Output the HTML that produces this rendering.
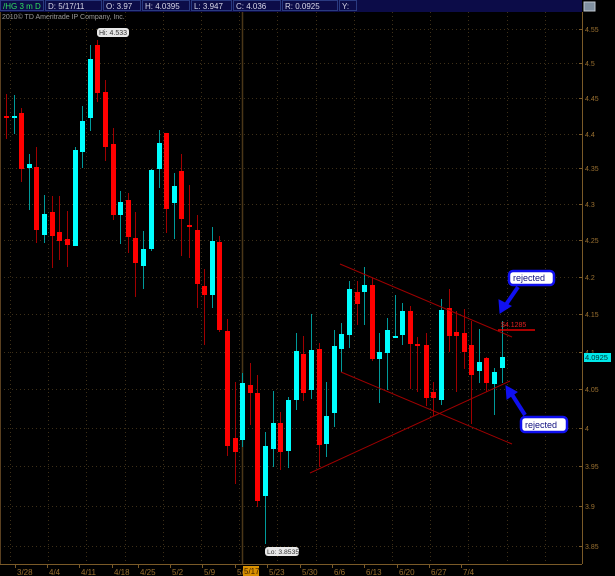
<!DOCTYPE html>
<html><head><meta charset="utf-8"><style>
html,body{margin:0;padding:0;background:#000;width:615px;height:576px;overflow:hidden}
svg{display:block;font-family:"Liberation Sans",sans-serif}
</style></head><body>
<svg id="s" width="615" height="576" xmlns="http://www.w3.org/2000/svg">
<rect width="615" height="576" fill="#000"/>
<rect x="0" y="0" width="582" height="12" fill="#0c0c48"/>
<g fill="none" stroke="#2a3a80" stroke-width="1">
<rect x="0.5" y="0.5" width="43" height="10"/><rect x="45.5" y="0.5" width="56" height="10"/>
<rect x="103.5" y="0.5" width="37" height="10"/><rect x="142.5" y="0.5" width="47" height="10"/>
<rect x="191.5" y="0.5" width="40" height="10"/><rect x="233.5" y="0.5" width="47" height="10"/>
<rect x="282.5" y="0.5" width="55" height="10"/><rect x="339.5" y="0.5" width="17" height="10"/>
</g>
<g font-size="8" fill="#d8d8e8">
<text x="3" y="9" fill="#30e060">/HG 3 m D</text>
<text x="48" y="9">D: 5/17/11</text><text x="106" y="9">O: 3.97</text>
<text x="145" y="9">H: 4.0395</text><text x="194" y="9">L: 3.947</text>
<text x="236" y="9">C: 4.036</text><text x="285" y="9">R: 0.0925</text><text x="342" y="9">Y:</text>
</g>
<rect x="584" y="2" width="11" height="9" fill="#8090a0" stroke="#c0c8d0"/>
<text x="2" y="19" font-size="7" fill="#9a9a9a">2010© TD Ameritrade IP Company, Inc.</text>
<g id="grid" stroke="#3e3018" stroke-dasharray="1,3"></g>
<line x1="582.5" y1="12" x2="582.5" y2="564" stroke="#7a5a28"/>
<line x1="0" y1="564.5" x2="582" y2="564.5" stroke="#7a5a28"/>
<line x1="0.5" y1="12" x2="0.5" y2="564" stroke="#5a4020"/>
<line x1="242.5" y1="12" x2="242.5" y2="564" stroke="#4a3618" stroke-width="1.5"/>
<g id="plab" font-size="7" fill="#9a7030"></g>
<g id="dlab" font-size="8" fill="#9a7030"></g>
<g id="c"></g>
<g stroke="#a00000" stroke-width="1">
<line x1="340" y1="264" x2="512" y2="337"/>
<line x1="341" y1="372" x2="512" y2="444"/>
<line x1="310" y1="473" x2="510" y2="381"/>
<line x1="498" y1="330" x2="535" y2="330" stroke="#e00000" stroke-width="1.5"/>
</g>
<text x="501" y="327" font-size="7" fill="#e02020">$4.1285</text>
<rect x="97" y="28" width="32" height="9" rx="3" fill="#e8e8e8"/>
<text x="99" y="35" font-size="7" fill="#333">Hi: 4.533</text>
<rect x="265" y="547" width="34" height="9" rx="3" fill="#e8e8e8"/>
<text x="267" y="554" font-size="6.8" fill="#333">Lo: 3.8535</text>
<rect x="584" y="353" width="27" height="9" fill="#00e8e8"/>
<text x="585" y="360" font-size="7.5" fill="#003030">4.0925</text>
<rect x="243" y="566" width="16" height="10" fill="#d89000"/>
<text x="244" y="574" font-size="8" fill="#402000">5/17</text>
<g fill="#1010f0" stroke="#1010f0">
<line x1="518" y1="287" x2="505" y2="306" stroke-width="4"/>
<polygon points="500,313 499,300 511,306" stroke-width="1"/>
<line x1="525" y1="415" x2="511" y2="393" stroke-width="4"/>
<polygon points="506,386 517,392 507,399" stroke-width="1"/>
</g>
<rect x="509" y="271" width="45" height="14" rx="4" fill="#fff" stroke="#1010f0" stroke-width="2.5"/>
<text x="513" y="281" font-size="9" fill="#101080">rejected</text>
<rect x="521" y="417" width="46" height="15" rx="4" fill="#fff" stroke="#1010f0" stroke-width="2.5"/>
<text x="525" y="428" font-size="9" fill="#101080">rejected</text>
</svg>
<script>
var NS="http://www.w3.org/2000/svg";
function el(p,t,a,txt){var e=document.createElementNS(NS,t);for(var k in a)e.setAttribute(k,a[k]);if(txt)e.textContent=txt;document.getElementById(p).appendChild(e);}
var py=[[4.55,29],[4.5,63],[4.45,98],[4.4,134],[4.35,168],[4.3,204],[4.25,240],[4.2,277],[4.15,314],[4.1,352],[4.05,389],[4,428],[3.95,466],[3.9,506],[3.85,546]];
py.forEach(function(p){el("grid","line",{x1:0,x2:582,y1:p[1]+.5,y2:p[1]+.5});
el("grid","line",{x1:579,x2:583,y1:p[1]+.5,y2:p[1]+.5,stroke:"#7a5a28","stroke-dasharray":"none"});
el("plab","text",{x:585,y:p[1]+3},String(p[0]));});
for(var x=10;x<582;x+=38.2){el("grid","line",{x1:Math.round(x)+.5,x2:Math.round(x)+.5,y1:12,y2:564});}
var d=[["3/28",15],["4/4",47],["4/11",79],["4/18",112],["4/25",138],["5/2",170],["5/9",202],["5/1",235],["5/23",267],["5/30",300],["6/6",332],["6/13",364],["6/20",397],["6/27",429],["7/4",461]];
d.forEach(function(v){el("dlab","text",{x:v[1]+2,y:575},v[0]);el("grid","line",{x1:v[1]+.5,x2:v[1]+.5,y1:564,y2:568,stroke:"#7a5a28","stroke-dasharray":"none"});});
var C=[[5.7,94,139,116,118,0],[13.5,95,134,116,118,1],[21,108,182,113,169,0],[28.7,154,210,164,168,1],[36,147,243,167,230,0],[43.5,195,243,214,235,1],[51.5,196,268,212,236,0],[59,196,260,232,241,0],[66.5,211,267,239,245,0],[74.5,147,246,150,246,1],[82,106,168,121,152,1],[89.5,45,131,59,118,1],[97,40,102,45,93,0],[104.5,80,161,92,147,0],[112.5,128,220,144,215,0],[120,191,244,202,215,1],[127.5,193,253,200,237,0],[135,212,297,238,263,0],[143,231,289,249,266,1],[151,169,251,170,249,1],[158.5,130,188,143,169,1],[166,133,233,133,209,0],[173.5,173,239,186,203,1],[181,154,256,171,219,0],[188.5,185,258,225,227,0],[196.5,215,308,230,284,0],[204,269,345,286,295,0],[211.5,227,308,241,295,1],[219,236,332,242,330,0],[227,319,456,331,446,0],[234.5,382,484,438,452,0],[242,373,447,383,440,1],[249.5,363,425,385,393,0],[257,375,507,393,501,0],[265,432,544,446,496,1],[272.5,391,467,423,449,1],[280,412,470,423,452,0],[288,397,468,400,451,1],[295.5,333,410,351,400,1],[303,336,401,354,393,0],[311,314,399,350,390,1],[318.5,343,467,349,445,0],[326,382,457,416,444,1],[333.5,330,427,346,413,1],[341,323,372,334,349,1],[349,281,348,289,335,1],[356.5,281,325,292,304,0],[364,267,325,285,292,1],[372,278,361,285,359,0],[379,333,403,352,359,1],[387,318,390,330,353,1],[394.5,295,337,336,338,1],[402,303,345,311,335,1],[409.5,306,389,311,344,0],[417,337,392,344,346,0],[425.5,333,406,345,398,0],[433,382,416,392,398,0],[441,299,405,310,400,1],[448.5,289,352,308,336,0],[456,311,392,332,336,0],[463.5,309,369,333,352,0],[471,321,424,345,375,0],[478.5,329,383,362,371,1],[486,357,392,358,383,0],[493.5,368,415,372,384,1],[501.5,321,383,357,368,1]];
C.forEach(function(c){var x=Math.round(c[0]);var up=c[5];
el("c","rect",{x:x,y:c[1],width:1,height:c[2]-c[1],fill:up?"#009a9a":"#a00000"});
el("c","rect",{x:x-2,y:c[3],width:5,height:Math.max(1,c[4]-c[3]),fill:up?"#00ffff":"#ff0000"});});
</script>
</body></html>
